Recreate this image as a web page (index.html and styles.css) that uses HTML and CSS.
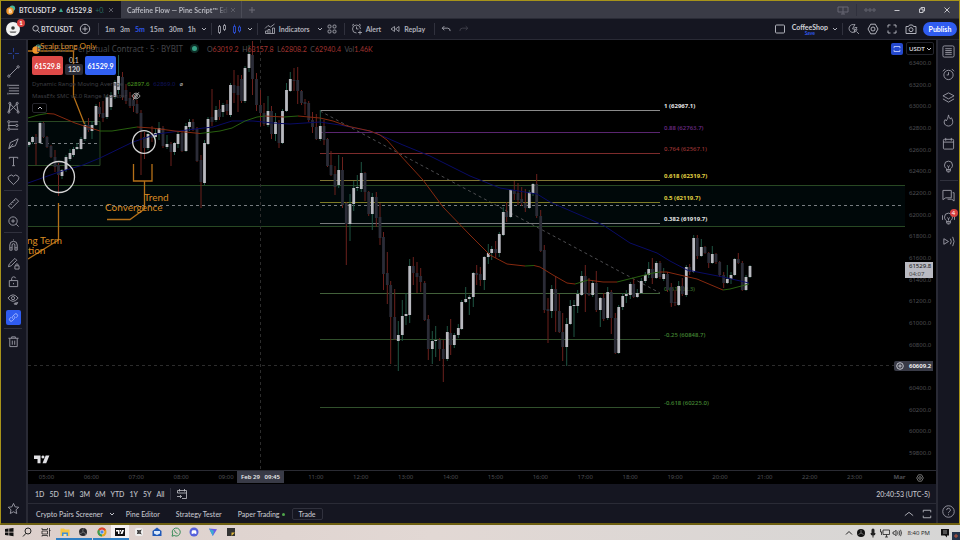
FILE: index.html
```
<!DOCTYPE html>
<html lang="en">
<head>
<meta charset="utf-8">
<title>BTCUSDT.P 61529.8</title>
<link rel="stylesheet" href="styles.css">
</head>
<body>
<svg class="defs" aria-hidden="true">
  <symbol id="chev" viewBox="0 0 8 8"><path d="M2 3l2 2 2-2"/></symbol>
  <symbol id="x" viewBox="0 0 8 8"><path d="M2 2l4 4M6 2l-4 4"/></symbol>
  <symbol id="plus" viewBox="0 0 8 8"><path d="M4 1v6M1 4h6"/></symbol>
  <symbol id="search" viewBox="0 0 12 12"><circle cx="5.500" cy="5.200" r="3.300"/><path d="M8 7.800l2.600 2.700"/></symbol>
  <symbol id="gear" viewBox="0 0 12 12"><path d="M3.700 1.200h4.600L11 6l-2.700 4.800H3.700L1 6z"/><circle cx="6" cy="6" r="2"/></symbol>
  <symbol id="corners" viewBox="0 0 12 12"><path d="M2 4.500V2h2.500M7.500 2H10v2.500M10 7.500V10H7.500M4.500 10H2V7.500"/></symbol>
  <symbol id="bulb" viewBox="0 0 14 14"><path d="M5 9.500C3.500 8.500 2.700 7.300 2.700 5.500a4.300 4.300 0 0 1 8.600 0c0 1.800-.8 3-2.300 4v2.500H5zM5 10.300h4M6 13h2M5.500 6l1.500 1.200L8.500 6M7 7.200v2"/></symbol>
  <symbol id="bars" viewBox="0 0 14 14"><path d="M2 2.500h11M2 5.500h11M2 8.500h11M2 11.500h11"/><path d="M1 1.500v2M1 10.500v2"/></symbol>
</svg>

<div class="window">
  <header class="tabs">
    <div class="tab tab-on">
      <svg class="coin" viewBox="0 0 10 10"><circle cx="6.300" cy="3.300" r="2.800" fill="#43b59d"/><circle cx="4" cy="6" r="3.700" fill="#f0952a"/><path d="M3.200 4.200h1.200a.8.8 0 0 1 0 1.700H3.200h1.500a.9.9 0 0 1 0 1.800H3.200z" stroke="#fff" fill="none" stroke-width=".7"/></svg>
      <b>BTCUSDT.P</b><i class="tri"></i><b>61529.8</b><span class="fade">+0.57</span>
      <svg class="i8 dim"><use href="#x"/></svg>
    </div>
    <div class="tab tab-off"><b class="fade2">Caffeine Flow — Pine Script™ Edi</b><svg class="i8 dim"><use href="#x"/></svg></div>
    <button class="newtab" aria-label="New tab"><svg class="i8"><use href="#plus"/></svg></button>
    <div class="winctl">
      <svg class="i12" viewBox="0 0 12 12"><path d="M1 3h10v5H1zM6 3v7M4 10h4"/></svg>
      <i class="vsep"></i>
      <svg class="i12" viewBox="0 0 12 12"><circle cx="2" cy="6" r="1.200"/><circle cx="6" cy="6" r="1.200"/><circle cx="10" cy="6" r="1.200"/></svg>
      <button aria-label="Minimize"><svg class="i8 lit" viewBox="0 0 8 8"><path d="M1.500 4.500h5"/></svg></button>
      <button aria-label="Restore"><svg class="i8 lit" viewBox="0 0 8 8"><path d="M1.500 3h3.500v3.500H1.500zM3 3V1.500h3.500V5H5"/></svg></button>
      <button aria-label="Close"><svg class="i8 lit" viewBox="0 0 8 8"><path d="M1.500 1.500l5 5M6.500 1.500l-5 5"/></svg></button>
    </div>
  </header>

  <nav class="top">
    <button class="avatar" aria-label="Account"><svg viewBox="0 0 14 14"><circle cx="7" cy="7" r="7" fill="#f2f2f2"/><circle cx="7" cy="6" r="1.800" fill="#333"/><path d="M3.500 9.500h7l-1 1.300h-5z" fill="#555"/></svg><span class="badge">1</span></button>
    <button class="sym"><svg class="i10"><use href="#search"/></svg>BTCUSDT.</button>
    <button class="cmp" aria-label="Compare"><svg class="i12" viewBox="0 0 12 12"><circle cx="6" cy="6" r="4.700"/><path d="M6 3.500v5M3.500 6h5"/></svg></button>
    <i class="vsep"></i>
    <div class="ivals"><button>1m</button><button>3m</button><button class="on">5m</button><button>15m</button><button>30m</button><button>1h</button></div>
    <button aria-label="More intervals"><svg class="i8"><use href="#chev"/></svg></button>
    <i class="vsep"></i>
    <button aria-label="Candles"><svg class="i12 thin" viewBox="0 0 12 12"><path d="M2.500 3.500h2v6h-2zM3.500 2v1.500M3.500 9.500V11M7.500 2.500h2v4h-2zM8.500 1v1.500M8.500 6.500V8"/></svg></button>
    <button class="on hollow" aria-label="Hollow candles"><svg class="i12 thin" viewBox="0 0 12 12"><path d="M2.500 3.500h2v6h-2zM3.500 1.500v2M3.500 9.500V11M7.500 4h2v4h-2zM8.500 2.500V4M8.500 8v1.500"/></svg></button>
    <button aria-label="More styles"><svg class="i8"><use href="#chev"/></svg></button>
    <i class="vsep"></i>
    <button class="txt"><svg class="i12 thin" viewBox="0 0 12 12"><path d="M1.500 10.500h9V5h-2v5.500M6 10.500V6.500H4v4M4 8H1.500v2.500M1 5.500l3-3 2.500 1.500L10.500 1"/></svg>Indicators</button>
    <button aria-label="Favorites"><svg class="i8"><use href="#chev"/></svg></button>
    <button class="tpl" aria-label="Templates"><svg class="i12 thin" viewBox="0 0 12 12"><rect x="2" y="2" width="3" height="3" rx="1"/><rect x="7" y="2" width="3" height="3" rx="1"/><rect x="2" y="7" width="3" height="3" rx="1"/><rect x="7" y="7" width="3" height="3" rx="1"/></svg></button>
    <i class="vsep"></i>
    <button class="txt"><svg class="i12 thin" viewBox="0 0 12 12"><path d="M9.500 6A4 4 0 1 0 5.500 10M5.500 3.500V6h2M1 2.500L3 1M10 2.500L8 1M9 7.500v4M7 9.500h4"/></svg>Alert</button>
    <button class="txt"><svg class="i12 thin" viewBox="0 0 12 12"><path d="M5.500 3.500L2 6l3.500 2.500zM10 3.500L6.500 6 10 8.500z"/></svg>Replay</button>
    <i class="vsep"></i>
    <button class="un" aria-label="Undo"><svg class="i10" viewBox="0 0 12 12"><path d="M4 2.500L1.500 5 4 7.500M1.500 5H8q3 0 3 3.500"/></svg></button>
    <button class="un off" aria-label="Redo"><svg class="i10" viewBox="0 0 12 12"><path d="M8 2.500L10.500 5 8 7.500M10.500 5H4Q1 5 1 8.500"/></svg></button>
    <div class="topright">
      <svg class="i12" viewBox="0 0 12 12"><rect x="1.500" y="2" width="9" height="8" rx="1"/></svg>
      <button class="layout">CoffeeShop<small>Save</small></button>
      <svg class="i8"><use href="#chev"/></svg>
      <i class="vsep"></i>
      <button aria-label="Quick search"><svg class="i12 thin" viewBox="0 0 12 12"><path d="M7 2a4 4 0 1 0 2 4M8.500 8.500l2.500 2.500M7 1L4.500 6H7l-1 3 3-4.500H6.500"/></svg></button>
      <button aria-label="Settings"><svg class="i12"><use href="#gear"/></svg></button>
      <button aria-label="Fullscreen"><svg class="i12"><use href="#corners"/></svg></button>
      <button aria-label="Snapshot"><svg class="i12" viewBox="0 0 12 12"><path d="M1 3.500h2.500l1-1.500h3l1 1.500H11v7H1z"/><circle cx="6" cy="6.700" r="2"/></svg></button>
      <button class="publish">Publish</button>
    </div>
  </nav>

  <main class="work">
    <aside class="tools">
      <button class="on" aria-label="Cross"><svg viewBox="0 0 14 14"><path d="M7 1v4.500M7 8.500V13M1 7h4.500M8.500 7H13"/></svg></button>
      <button aria-label="Trend line"><svg viewBox="0 0 14 14"><path d="M3 11l8-8"/><circle cx="2" cy="12" r="1.200"/><circle cx="12" cy="2" r="1.200"/></svg></button>
      <button aria-label="Fibonacci"><svg><use href="#bars"/></svg></button>
      <button aria-label="Pattern"><svg viewBox="0 0 14 14"><path d="M2 11.500L3.500 3 7 7l3.500-4L12 11.500M3.500 3L2 11.500 7 7l5 4.500"/><circle cx="3" cy="2.500" r="1.100"/><circle cx="11" cy="2.500" r="1.100"/><circle cx="2" cy="12" r="1.100"/><circle cx="12" cy="12" r="1.100"/></svg></button>
      <button aria-label="Forecast"><svg viewBox="0 0 14 14"><path d="M3.500 3H12M1 7h8M3.500 11H12M2 4.500v5"/><circle cx="2" cy="3" r="1.200"/><circle cx="2" cy="11" r="1.200"/><circle cx="10.500" cy="7" r="1.200"/></svg></button>
      <button aria-label="Brush"><svg viewBox="0 0 14 14"><path d="M2 12.500L3.500 6 12 2l-3 7.500-4 1zM2 12.500l4.500-5"/></svg></button>
      <button aria-label="Text"><svg viewBox="0 0 14 14"><path d="M2.500 4V2.500h9V4M7 2.500v9M5.500 11.500h3"/></svg></button>
      <button aria-label="Emoji"><svg viewBox="0 0 14 14"><path d="M7 12.500L2 7.500A3 3 0 0 1 7 3.500 3 3 0 0 1 12 7.500z"/></svg></button>
      <hr>
      <button aria-label="Measure"><svg viewBox="0 0 14 14"><path d="M1.500 9.500l8-8 3 3-8 8zM4 7.500l1 1M6 5.500l1 1M8 3.500l1 1"/></svg></button>
      <button aria-label="Zoom"><svg viewBox="0 0 14 14"><circle cx="6.500" cy="6.500" r="4.500"/><path d="M10 10l2.500 2.500M6.500 4.500v4M4.500 6.500h4"/></svg></button>
      <hr>
      <button aria-label="Magnet"><svg viewBox="0 0 14 14"><path d="M3 12V6.500a4 4 0 0 1 8 0V12H8.500V6.500a1.500 1.500 0 0 0-3 0V12zM3 9.500h2.500M8.500 9.500H11M7 .5v1"/></svg></button>
      <button aria-label="Keep drawing"><svg viewBox="0 0 14 14"><path d="M1.500 10.500l1-3 6-6 2 2-6 6zM8.500 9.500h4.500v3.500H8.500zM9.500 9.500V8.500a1.200 1.200 0 0 1 2.400 0v1"/></svg></button>
      <button aria-label="Lock"><svg viewBox="0 0 14 14"><path d="M2.500 6h9v6.500h-9zM5 6V4a2.200 2.200 0 0 1 4.300-.5M7 8.500v1.500"/></svg></button>
      <button aria-label="Hide"><svg viewBox="0 0 14 14"><path d="M1 5.500q5.500-7 11 0-5.500 7-11 0zM8 12l4-2"/><circle cx="6.500" cy="5.500" r="1.700"/><ellipse cx="9.500" cy="11.500" rx="1.700" ry=".8"/></svg></button>
      <button class="active" aria-label="Sync drawings"><svg viewBox="0 0 14 14"><path d="M6 8.500a2.300 2.300 0 0 1 0-3l2.500-2.700a2.200 2.200 0 0 1 3.200 3L10 7.500M8 5.500a2.300 2.300 0 0 1 0 3l-2.500 2.700a2.200 2.200 0 0 1-3.200-3L4 6.500"/></svg></button>
      <hr>
      <button aria-label="Delete"><svg viewBox="0 0 14 14"><path d="M1.500 3.500h11M3 3.500v9h8v-9M5 3.500V2h4v1.500M5.700 6v4.500M8.300 6v4.500"/></svg></button>
      <button class="last" aria-label="Favorite"><svg viewBox="0 0 14 14"><path d="M7 1.500l1.700 3.700 4 .5-3 2.700.8 4L7 10.500l-3.500 1.900.8-4-3-2.700 4-.5z"/></svg></button>
    </aside>

    <section class="center">
      <div class="chartrow">
        <div class="chart">
          <svg id="plot" class="plot" viewBox="28 40 877 430" preserveAspectRatio="xMinYMin slice" role="img" aria-label="Price chart">
            <g fill="#000809" stroke="#284823"><path d="M20 185.500h900v41H20z"/><path d="M20 121.500h80v44H20z"/></g>
            <g stroke="#777c80" stroke-dasharray="3 3"><path d="M28 205.500h876M28 143.500h72"/></g>
            <g stroke="#2c2c2c" stroke-dasharray="3 3"><path d="M260.500 40v430M28 365.500h876"/></g>
            <path d="M320 111L660 293" stroke="#4d4d50" stroke-dasharray="3 3"/>
            <g id="fib"></g>
            <g id="candles"></g>
            <g fill="none" stroke-width="1">
              <path stroke="#090b66" d="M28 183L59 172 83 165 100 158 133 142 157 134 187 130 213 127 232 121 253 121 273 123 290 124 320 122 340 125 370 131 387 138 403 145 430 156 470 176 500 188 537 194 550 202 580 215 603 225 630 243 657 253 670 261 687 270 723 277 749 283"/>
              <path stroke="#86290f" d="M47 113.500L54 114 75 123 100 131M137 127L152 128 175 131 200 133.500M265 116L284 117M298 116L320 118 333 121 347 126 370 131 380 135 387 140 400 155 423 180 443 207 470 235 490 255 507 264 525 266M534 265.500L540 267 553 275 567 283 575 284M588 280L603 282 617 282M660 272L667 272 697 279 723 290"/>
              <path stroke="#28600f" d="M28 118L38 115 47 113.500M100 131L112 131 137 127M200 133.500L220 131 232 128 245 121 257 117 265 116M284 117L298 116M525 266L534 265.500M575 284L588 280M617 282L637 277 653 273 660 272M723 290L730 289 749 284"/>
            </g>
            <g fill="none" stroke="#d5d5d5" stroke-width="1.300"><circle cx="59" cy="177" r="15.500"/><circle cx="144" cy="142" r="11.300"/></g>
            <g fill="none" stroke="#b57018" stroke-width="1.300"><path d="M28 51h45.500v45l11 28M133.500 164v17h18.500v-17M144.500 181v28L130 219.500h-23M58.500 203v37L28 259"/></g>
            <g class="notes"><text x="144" y="201">Trend</text><text x="105" y="211">Convergence</text><text x="27" y="244">ng Term</text><text x="28" y="254">tion</text></g>
            <path fill="#e0e0e4" d="M34 455.500h6.500v7.800h-3v-4.300H34zM43 455.500a1.500 1.500 0 1 1-.1 0zM45.700 455.500h3.700l-3.200 7.800h-3.700z"/>
          </svg>
          <div class="legend">
            <div class="title"><svg class="coin" viewBox="0 0 10 10"><circle cx="6.300" cy="3.300" r="2.800" fill="#43b59d"/><circle cx="4" cy="6" r="3.700" fill="#f0952a"/></svg><span class="name">BTCUSDT Perpetual Contract · 5 · BYBIT<span class="scalp">Scalp Long Only</span></span><i class="live"></i><span class="ohlc">O<em>63019.2</em> &nbsp;H<em>63157.8</em> &nbsp;L<em>62808.2</em> &nbsp;C<em>62940.4</em> &nbsp;Vol<em>1.46K</em></span></div>
            <div class="trade"><button class="sell">61529.8</button><div class="qty"><span>0.1</span><b>120</b></div><button class="buy">61529.9</button></div>
            <div class="ind">Dynamic Range Moving Average <span class="g">62897.6</span> <span class="b">62869.0</span> <span class="o">ø</span></div>
            <div class="ind">MassEfx SMC v2.0 Range Monster <svg class="i10" viewBox="0 0 12 12"><path d="M1 6q5-7 10 0-5 7-10 0zM2.500 10.500l7-9"/><circle cx="6" cy="6" r="1.700"/></svg></div>
            <button class="fold" aria-label="Collapse"><svg class="i8" viewBox="0 0 8 8"><path d="M2 5l2-2 2 2"/></svg></button>
          </div>
          <button class="sync" aria-label="Sync"><svg class="i10" viewBox="0 0 12 12"><path d="M2.500 5V3h7v2M9.500 7v2h-7V7"/></svg></button>
          <span class="pluscross"><svg class="i8" viewBox="0 0 8 8"><circle cx="4" cy="4" r="3.300"/><path d="M4 2.300v3.400M2.300 4h3.400"/></svg></span>
        </div>
        <div class="paxis">
          <label class="cur"><select aria-label="Currency"><option>USDT</option></select><svg class="i8"><use href="#chev"/></svg></label>
          <div class="plist"><span>63400.0</span><span>63200.0</span><span>63000.0</span><span>62800.0</span><span>62600.0</span><span>62400.0</span><span>62200.0</span><span>62000.0</span><span>61800.0</span><span>61600.0</span><span>61400.0</span><span>61200.0</span><span>61000.0</span><span>60800.0</span><span></span><span>60400.0</span><span>60200.0</span><span>60000.0</span><span>59800.0</span></div>
          <div class="last-price">61529.8<br><span>04:07</span></div>
          <div class="cross-price">60609.2</div>
        </div>
      </div>
      <div class="taxis">
        <div class="times"><span>05:00</span><span>06:00</span><span>07:00</span><span>08:00</span><span>09:00</span><span></span><span>11:00</span><span>12:00</span><span>13:00</span><span>14:00</span><span>15:00</span><span>16:00</span><span>17:00</span><span>18:00</span><span>19:00</span><span>20:00</span><span>21:00</span><span>22:00</span><span>23:00</span><b>Mar</b></div>
        <span class="cross-time">Feb 29 &nbsp; 09:45</span>
        <button class="axisgear" aria-label="Axis settings"><svg class="i8" viewBox="0 0 12 12"><use href="#gear"/></svg></button>
      </div>
      <div class="ranges"><button>1D</button><button>5D</button><button>1M</button><button>3M</button><button>6M</button><button>YTD</button><button>1Y</button><button>5Y</button><button>All</button><i class="vsep"></i><button aria-label="Go to date"><svg class="i12 thin" viewBox="0 0 12 12"><path d="M1.500 5V2.500h9v8H6M1.500 5h9M3.500 1v2.500M8.500 1v2.500M1 8.500h4.500M4 7l1.500 1.500L4 10"/></svg></button><span class="clock">20:40:53 (UTC-5)</span></div>
      <div class="panels"><button class="scr">Crypto Pairs Screener<svg class="i8"><use href="#chev"/></svg></button><button>Pine Editor</button><button>Strategy Tester</button><button>Paper Trading<i class="gdot"></i></button><button class="tradebtn">Trade</button><span class="pend"><svg class="i10" viewBox="0 0 12 12"><path d="M1 8l5-4 5 4"/></svg><svg class="i10" viewBox="0 0 12 12"><path d="M1.500 4V1.500h9V4M10.500 8v2.500h-9V8"/></svg></span></div>
    </section>

    <aside class="rail">
      <button aria-label="Watchlist"><svg viewBox="0 0 14 14"><rect x="1" y="1" width="12" height="12" rx="1.500"/><path d="M3.500 4h7M3.500 6h7M3.500 8h7M3.500 10h7"/></svg></button>
      <button aria-label="Alerts"><svg viewBox="0 0 14 14"><circle cx="7" cy="7.500" r="5"/><path d="M7 4.500v3H5M1 3.500L3.500 1M13 3.500L10.500 1"/></svg></button>
      <button aria-label="Object tree"><svg viewBox="0 0 14 14"><path d="M7 2l6 3.200-6 3.300-6-3.300zM1 8.500l6 3.500 6-3.500"/></svg></button>
      <button aria-label="Hotlists"><svg viewBox="0 0 14 14"><path d="M7 1c.5 3 1.500 3 2 4.500l1-1.500c2 2.500 3 8.500-3 9-6-.5-5-6-3.500-7L4.500 7.500C6 5.500 6.500 4 7 1z"/></svg></button>
      <button aria-label="Calendar"><svg viewBox="0 0 14 14"><rect x="1.500" y="2.500" width="11" height="10.500" rx="1"/><path d="M1.500 5.500h11M4 1v3M10 1v3"/></svg></button>
      <button aria-label="Ideas"><svg><use href="#bulb"/></svg></button>
      <hr>
      <button aria-label="Chats"><svg viewBox="0 0 14 14"><path d="M1 1.500h9v8H4L1 11.500zM11.500 4H13v9l-2.500-2H6"/></svg></button>
      <button class="ntf" aria-label="Streams"><svg viewBox="0 0 14 14"><use href="#bulb"/><path d="M.5 3.500v5M13.500 3.500v5"/></svg><span class="badge">4</span></button>
      <button aria-label="Broadcast"><svg viewBox="0 0 14 14"><path d="M2 4v6l5-3zM9 4q2 3 0 6M11.500 2q3 5 0 10"/></svg></button>
      <button class="last" aria-label="Help"><svg viewBox="0 0 14 14"><circle cx="7" cy="7" r="6.200"/><path d="M5 5.500a2 2 0 1 1 2.800 1.800Q7 7.800 7 8.800M7 10v1"/></svg></button>
    </aside>
  </main>
</div>

<footer class="taskbar">
  <div class="apps">
    <button aria-label="Start"><svg viewBox="0 0 10 10" fill="#111"><path d="M1 2l3.500-.5v3.200H1zM5.200 1.400L9.500 1v3.700H5.200zM1 5.400h3.500v3.200L1 8zM5.200 5.400h4.300V9.200l-4.300-.6z"/></svg></button>
    <button aria-label="Search"><svg viewBox="0 0 10 10" fill="none" stroke="#222"><circle cx="6" cy="4" r="3"/><path d="M4 6.300L1 9.500"/></svg></button>
    <button aria-label="Task view"><svg viewBox="0 0 10 10" fill="none" stroke="#222" stroke-width=".8"><path d="M1 1v1.500h5.500V1M1 4h5.500v3H1zM1 9.500V8.500h5.500v1M8.500 1v8.500M8 3.500h1.500"/></svg></button>
    <button class="run" aria-label="Files"><svg viewBox="0 0 10 10"><path d="M.5 1.500h3.500l1 1h4.500V9h-9z" fill="#f5c644"/><path d="M2 5.500h6V9H2z" fill="#3f8fd6"/><path d="M3.500 7h3v2h-3z" fill="#f5e3a0"/></svg></button>
    <button class="run" aria-label="OBS"><svg viewBox="0 0 10 10"><circle cx="5" cy="5" r="4" fill="#2a2a2d"/><path d="M5 5q-1-3 1-3.500M5 5q3 .5 2.500 3M5 5q-2 2.500-4 1" stroke="#888" fill="none" stroke-width=".7"/></svg></button>
    <button class="run" aria-label="Chrome"><svg viewBox="0 0 10 10"><circle cx="5" cy="5" r="4.500" fill="#e2a51f"/><path d="M5 5L1.100 2.700A4.500 4.500 0 0 1 8.900 2.700z" fill="#db4437"/><path d="M5 5L1.100 2.700A4.500 4.500 0 0 0 5 9.500z" fill="#3a9a52"/><circle cx="5" cy="5" r="2" fill="#4a87ee" stroke="#fff" stroke-width=".6"/></svg></button>
    <button class="run sel" aria-label="TradingView"><svg viewBox="0 0 10 10"><path fill="#111" d="M0 1h10v8H0z"/><path fill="#fff" d="M1 3h3.500v4H3V4.500H1zM5 3h1v1.500H5zM7 3h2L7.500 7h-2z"/></svg></button>
    <button aria-label="CapCut"><svg viewBox="0 0 10 10"><rect x="1" y="1" width="8" height="8" rx="2" fill="#eee"/><path d="M3 3.700h3L7.500 3M3 6.300h3l1.500.7M3 3.700l4 2.300M3 6.300L7 4" stroke="#222" fill="none" stroke-width=".9"/></svg></button>
    <button aria-label="Mail"><svg viewBox="0 0 10 10"><path d="M.5 4L5 .5 9.500 4v5h-9z" fill="#2059b8"/><path d="M2 4h6v2.500L5 8 2 6.500z" fill="#dceafa"/></svg></button>
    <button aria-label="WhatsApp"><svg viewBox="0 0 10 10" fill="none" stroke="#3b8c5a" stroke-width="1"><path d="M1 9.200l.7-2.300A4 4 0 1 1 3.200 8.500z"/><path d="M3.500 3.200q.2 2.800 3 3.300"/></svg></button>
    <button aria-label="Discord"><svg viewBox="0 0 10 10"><circle cx="5" cy="5" r="4.500" fill="#5661dc"/><path d="M2.500 6.500q0-3 1-3.200h3q1 .2 1 3.200l-1.200.5-.5-.6h-1.600l-.5.6z" fill="#fff"/></svg></button>
    <button aria-label="Proton"><svg viewBox="0 0 10 10"><path d="M1 1.500l8 .7L4.800 9z" fill="#6a5ae8"/><path d="M1 1.500l5 2.500-1.200 5z" fill="#3aaed0"/></svg></button>
    <button aria-label="Notes"><svg viewBox="0 0 10 10"><path d="M1 1h8v8H1z" fill="#333"/><path d="M5.500 9V5.500H9z" fill="#e2b93b"/></svg></button>
  </div>
  <div class="tray">
    <svg viewBox="0 0 10 10" fill="none" stroke="#222"><path d="M2 6.500l3-3 3 3"/></svg>
    <svg viewBox="0 0 10 10"><circle cx="5" cy="5" r="4" fill="#111"/><path d="M5 5V2M5 5l2.500 1.500M5 5L2.500 6.500" stroke="#aaa" stroke-width=".6"/></svg>
    <svg viewBox="0 0 10 10" fill="#222"><rect x="3.500" y=".5" width="3" height="5.500" rx="1.500"/><path d="M2.500 5h5q0 2.500-2 2.500V9.500h-1V7.500q-2 0-2-2.500z"/></svg>
    <svg viewBox="0 0 10 10" fill="none" stroke="#222" stroke-width=".8"><path d="M3 2h6.500v4.500H3zM5 9h3M6.500 6.500V9M.5 1v3h2M1.500 4v3"/></svg>
    <svg viewBox="0 0 10 10" fill="none" stroke="#222" stroke-width=".8"><path d="M1 4v2h1.300L4 7.800V2.200L2.300 4zM5.500 3.500q1 1.500 0 3M7 2.500q1.800 2.500 0 5M8.500 1.800q2 3.200 0 6.400"/></svg>
    <time>8:40 PM</time>
    <svg class="note" viewBox="0 0 10 10" fill="#111"><path d="M1 1h8v6.500H7V9.500L5 7.500H1z"/><path d="M3 3h4M3 5h4" stroke="#ccc" stroke-width=".7"/></svg>
    <svg class="pin" viewBox="0 0 8 8"><path fill="#243349" d="M0 0h8v8H0z"/><path d="M4 2v4M2 4h4" stroke="#c0583c"/></svg>
  </div>
</footer>
<script src="chart.js"></script>
</body>
</html>
```
FILE: styles.css
```
* { box-sizing: border-box; }
html, body { height: 100%; margin: 0; }
body {
  display: flex; flex-direction: column; overflow: hidden;
  background: #000; color: #c4c5cc;
  font: 7px/10px Lato, "Open Sans", sans-serif;
}
button { all: unset; box-sizing: border-box; display: flex; align-items: center; justify-content: center; flex: none; cursor: pointer; }
svg { display: block; flex: none; }
.defs { position: absolute; width: 0; height: 0; }
.window svg { fill: none; stroke: currentColor; stroke-width: 1; }
.window .thin { stroke-width: .8; }
.window .coin { width: 10px; height: 10px; stroke: none; }
.i8 { width: 8px; height: 8px; }
.i10 { width: 10px; height: 10px; }
.i12 { width: 12px; height: 12px; }
.vsep { width: 1px; height: 12px; background: #30313d; flex: none; }
.window {
  flex: 1; min-height: 0; display: flex; flex-direction: column;
  border: 1px solid #a8941a; border-bottom: 2px solid #6d5f10; background: #292a35;
}
.badge { position: absolute; background: #d8403f; color: #fff; border-radius: 50%; width: 8px; height: 8px; font-size: 6px; line-height: 8px; text-align: center; }

.tabs { display: flex; height: 17px; background: #3a3b46; flex: none; }
.tab { display: flex; align-items: center; font-size: 7px; color: #d8d8dc; }
.tab-on { width: 120px; background: #15151f; padding: 0 6px 0 5px; gap: 3px; }
.tab-on b { font-weight: 700; }
.tab-on .i8 { margin-left: auto; }
.tri { border: 2px solid transparent; border-bottom: 4px solid #3aa98c; border-top: 0; }
.fade { color: #2b6f62; width: 16px; overflow: hidden; }
.tab-off { width: 121px; padding: 0 4px 0 6px; border-right: 1px solid #4b4c57; color: #b5b6be; justify-content: space-between; }
.fade2 { flex: 1; min-width: 0; overflow: hidden; white-space: nowrap; font-weight: 700; -webkit-mask-image: linear-gradient(90deg, #000 85%, transparent); mask-image: linear-gradient(90deg, #000 85%, transparent); }
.dim { color: #5b5c66; }
.newtab { width: 20px; color: #6c6d77; }
.winctl { margin-left: auto; display: flex; align-items: center; gap: 7px; color: #666772; padding-right: 8px; }
.winctl button { margin-left: 10px; }
.winctl .lit { color: #c6c6cc; }

.top { display: flex; align-items: center; height: 21px; flex: none; background: #151621; border-top: 1px solid #2a2b36; padding: 0 2px 0 5px; color: #b0b1ba; font-weight: 700; }
.top button { white-space: nowrap; }
.avatar { position: relative; width: 14px; height: 14px; }
.avatar svg { width: 14px; height: 14px; stroke: none; }
.avatar .badge { left: 11px; top: -3px; }
.sym { margin-left: 11px; width: 42px; justify-content: flex-start; color: #d2d3d8; }
.cmp { margin: 0 4px 0 6px; }
.ivals { display: flex; margin: 0 4px 0 2px; gap: 5px; }
.on { color: #2f56e8; }
.top > .vsep { margin: 0 4px 0 3px; }
.hollow { margin: 0 3px; }
.txt { gap: 3px; margin-right: 6px; }
.vsep + .txt, .txt + .txt { margin-left: 2px; }
.tpl { margin: 0 3px 0 2px; }
.un { margin-left: 2px; margin-right: 6px; }
.off { color: #44454f; }
.topright { margin-left: auto; display: flex; align-items: center; gap: 7px; }
.topright .layout { flex-direction: column; color: #d0d1d6; line-height: 8px; margin: 0 -4px 0 -1px; }
.layout small { font-size: 5px; line-height: 5px; color: #2f56e8; }
.topright .vsep { margin: 0 -2px 0 -4px; }
.topright .publish { background: #2f5cf0; color: #fff; height: 14px; width: 34px; border-radius: 7px; margin-left: -1px; }

.work { flex: 1; min-height: 0; display: flex; gap: 2px; padding-top: 1px; }
.tools, .rail { display: flex; flex-direction: column; align-items: center; background: #151621; flex: none; color: #9a9ba5; }
.tools { width: 25px; padding: 4px 1px 6px 0; }
.tools button { width: 18px; height: 18px; }
.tools svg { width: 13px; height: 13px; }
.tools .on { color: #27419a; }
.tools .active { width: 15px; height: 15px; background: #2f5cf0; border-radius: 2px; margin: 2px 0 1px; color: #b9c7ff; }
.tools .active svg { width: 11px; height: 11px; }
.tools hr, .rail hr { width: 18px; height: 1px; border: 0; background: #30313d; margin: 2px 0 3px; flex: none; }
.last { margin-top: auto; }
.rail { width: 21px; padding: 0; }
.rail button { width: 20px; height: 23px; position: relative; }
.rail svg { width: 13px; height: 13px; }
.rail .badge { left: 11px; top: 2px; }

.center { flex: 1; min-width: 0; display: flex; flex-direction: column; background: #000; }
.chartrow { flex: 1; min-height: 0; display: flex; }
.chart { position: relative; flex: 1; min-width: 0; overflow: hidden; }
.chart .plot { width: 100%; height: 100%; stroke: none; }
.plot text { stroke: none; font: 6px "Noto Sans", sans-serif; }
.plot .notes text { font: 10px Lato, sans-serif; fill: #d98a22; }
.legend { position: absolute; left: 4px; top: 3px; display: flex; flex-direction: column; align-items: flex-start; }
.title { display: flex; align-items: center; height: 11px; color: #44454a; white-space: nowrap; }
.name { position: relative; width: 141px; display: flex; justify-content: flex-end; font: 8px/10px "Noto Sans", sans-serif; }
.scalp { position: absolute; left: -2px; top: -3px; font: 8px/10px Lato, sans-serif; color: #d98a22; }
.live { width: 5px; height: 5px; border-radius: 50%; background: #36a184; box-shadow: 0 0 0 2px #0d2c25; margin: 0 10px 0 9px; }
.ohlc { font-size: 7px; color: #4d4e54; }
.ohlc em { font-style: normal; color: #a33431; }
.trade { display: flex; align-items: flex-end; gap: 2px; margin-top: 2px; height: 19px; font-weight: 700; }
.sell, .buy { width: 31px; height: 19px; border-radius: 2px; color: #fff; background: #de4a48; }
.buy { background: #3160f2; }
.qty { width: 18px; text-align: center; color: #c8c8cc; line-height: 8px; }
.qty span { display: block; font-weight: 400; }
.qty b { display: block; background: #2b2c36; border-radius: 2px; line-height: 11px; }
.ind { display: flex; gap: 4px; align-items: center; height: 12px; color: #3d3e42; font: 6px/10px "Noto Sans", sans-serif; }
.trade + .ind { margin-top: 3px; }
.ind .g { color: #4c9c22; }
.ind .b { color: #11145c; }
.ind .o, .ind svg { color: #bbb; }
.fold { width: 15px; height: 10px; border: 1px solid #26262c; border-radius: 2px; margin-top: 1px; }
.sync { position: absolute; right: 2px; top: 3px; width: 12px; height: 12px; background: #2448cc; color: #c8d4ff; border-radius: 2px; }
.pluscross { position: absolute; right: 0; top: 321px; width: 11px; height: 10px; background: #393b47; display: flex; align-items: center; justify-content: center; border-radius: 2px 0 0 2px; }
.paxis { position: relative; width: 31px; flex: none; font-family: "Noto Sans", sans-serif; font-size: 6px; color: #4e4f54; }
.cur { display: flex; align-items: center; width: 28px; height: 13px; margin: 2px 0 0 1px; border: 1px solid #23242c; border-radius: 2px; padding-left: 2px; color: #c4c5cc; }
.cur select { appearance: none; border: 0; background: none; color: inherit; font: 700 6px/10px Lato, sans-serif; padding: 0; width: 17px; }
.plist { position: absolute; top: 18px; bottom: 12px; left: 4px; display: flex; flex-direction: column; justify-content: space-between; }
.plist span { height: 10px; }
.last-price, .cross-price { position: absolute; left: 0; width: 28px; padding-left: 4px; }
.last-price { top: 222px; height: 16px; line-height: 8px; background: #b9bac2; color: #111; }
.last-price span { color: #444; }
.cross-price { top: 321px; height: 10px; background: #393b47; color: #fff; font-weight: 600; }
.taxis { position: relative; height: 14px; flex: none; border-top: 1px solid #2a2b33; overflow: hidden; color: #4e4f54; font-family: "Noto Sans", sans-serif; font-size: 6px; }
.times { display: grid; grid-template-columns: repeat(20, 1fr); margin: 0 14px 0 -4px; text-align: center; line-height: 13px; }
.cross-time { position: absolute; left: 209px; top: 0; width: 47px; height: 12px; line-height: 12px; text-align: center; background: #393b47; color: #e8e8ea; font-weight: 600; }
.axisgear { position: absolute; right: 12px; top: 3px; color: #aaa; }
.ranges { display: flex; align-items: center; height: 19px; flex: none; background: #151621; padding: 0 6px 0 7px; gap: 5px; font-weight: 500; }
.clock { margin-left: auto; }
.panels { display: flex; align-items: center; height: 20px; flex: none; background: #151621; border-top: 1px solid #2a2b36; padding: 1px 4px 0 8px; gap: 16px; font-weight: 500; }
.panels .scr { gap: 5px; margin-right: -6px; }
.gdot { width: 3px; height: 3px; border-radius: 50%; background: #4fa54a; margin-left: 2px; }
.tradebtn { border: 1px solid #30313d; border-radius: 2px; height: 12px; padding: 0 6px; margin-left: -9px; }
.pend { margin-left: auto; display: flex; gap: 8px; }

.taskbar { height: 15px; flex: none; display: flex; justify-content: space-between; background: linear-gradient(90deg, #dccfcb, #e2d8d4 45%, #d6d6d5); color: #222; }
.apps { display: flex; }
.apps button { width: 18px; border-bottom: 1px solid transparent; }
.apps button:nth-child(n+3) { margin-left: 1px; }
.apps button:nth-child(2n+5) { margin-left: 0; }
.apps svg { width: 10px; height: 10px; }
.apps .run { border-bottom: 2px solid #2f7fc4; }
.apps .sel { background: #f6f2f1; }
.tray { display: flex; align-items: center; gap: 2px; }
.tray svg { width: 10px; height: 10px; }
.tray time { margin: 0 8px 0 4px; font: 6px/10px "Open Sans", sans-serif; }
.tray .pin { width: 8px; height: 8px; align-self: flex-end; }
```
FILE: chart.js
```
const NS = 'http://www.w3.org/2000/svg';
const add = (parent, tag, attrs, text) => {
  const el = document.createElementNS(NS, tag);
  for (const k in attrs) el.setAttribute(k, attrs[k]);
  if (text) el.textContent = text;
  parent.appendChild(el);
};

// Fibonacci levels: y, line colour, label colour, label, weight
[
  [110.5, '#8b8b8b', '#e4e4e4', '1 (62967.1)', 700],
  [132.5, '#5a2570', '#702c8c', '0.88 (62763.7)', 500],
  [153.5, '#7c2b2b', '#9c3434', '0.764 (62567.1)', 500],
  [180.5, '#7e7434', '#e0d040', '0.618 (62319.7)', 700],
  [202.5, '#7d7a25', '#e0d040', '0.5 (62119.7)', 700],
  [223.5, '#77797b', '#e4e4e4', '0.382 (61919.7)', 700],
  [293.5, '#42613a', '#3a702c', '0 (61302.3)', 500],
  [339.5, '#31502c', '#448834', '-0.25 (60848.7)', 500],
  [407.5, '#31502c', '#448834', '-0.618 (60225.0)', 500]
].forEach(([y, line, color, label, weight]) => {
  add(fib, 'path', { d: `M320 ${y}H660`, stroke: line });
  add(fib, 'text', { x: 664, y: y - 3, fill: color, style: `font-weight:${weight}` }, label);
});

// Candles: x, high, body top, body bottom, low, 1 when the close is above the open
const data = [
[29,141,142,145,147,1],[32.5,136,137,142,144,1],[36,134,137,143,165,0],[40,121,123,143,144,1],[43.5,122,123,137,138,0],[47,136,137,147,148,0],[51,145,146,157,158,0],[55,150,157,167,172,0],[58.5,163,165,175,196,0],[62,169,170,176,179,1],[66,155,157,170,172,1],[70,149,153,159,161,1],[73.5,147,149,155,157,1],[77,143,147,149,150,1],[81,137,139,149,150,1],[85,121,125,139,141,1],[88.500,118,125,130,132,0],[92,121,125,131,139,1],[96,104,106,125,126,1],[99.500,102,107,114,117,0],[103,101,113,118,122,0],[107,95,97,117,119,1],[111,92,95,107,110,1],[115,80,82,97,99,1],[118.500,55,76,90,94,1],[122.500,72,77,97,100,0],[126,84,90,101,104,0],[130,92,98,106,108,0],[133.500,95,100,106,112,0],[137,100,104,113,114,0],[141,110,113,132,175,0],[144.500,132,137,148,159,0],[148,131,134,148,150,1],[152,126,133,138,142,0],[155.500,129,133,137,140,1],[159,122,128,133,140,1],[163,126,128,146,148,0],[167,135,144,147,149,1],[171,142,144,152,166,0],[174.500,142,143,152,155,1],[178,131,134,144,148,1],[182,132,133,151,152,0],[186,123,126,151,152,1],[189.500,119,122,127,131,1],[193,119,122,129,131,0],[197,127,129,161,162,0],[201,155,160,182,208,0],[204.500,140,143,183,185,1],[208,117,119,144,145,1],[212,89,117,122,126,0],[216,106,110,120,122,1],[219.500,100,109,117,120,0],[223,103,105,112,117,1],[227,100,104,111,115,0],[230.500,83,85,115,117,1],[234,70,85,93,103,0],[238,75,86,95,112,0],[241.500,75,79,101,103,0],[245,66,68,101,103,1],[249,45,54,68,72,1],[252.500,41,55,79,95,0],[256.500,73,79,105,111,0],[260.500,90,105,113,126,0],[264,103,113,124,126,0],[268,96,111,125,127,1],[271.500,106,111,134,139,0],[275.500,113,122,134,141,1],[279,120,123,143,148,0],[282.500,109,111,143,144,1],[286.500,83,90,111,112,1],[290.300,72,79,91,92,1],[294,68,80,81,91,0],[297.700,67,80,91,104,0],[301.500,90,91,103,105,0],[305,99,102,104,115,0],[308.700,101,103,120,122,0],[312.500,112,120,127,133,0],[316.300,114,127,139,140,0],[320.300,110,126,139,141,1],[324,120,126,140,145,0],[327.500,138,139,166,167,0],[331,151,165,175,176,0],[335,166,174,187,195,0],[338.700,155,170,185,188,1],[342.500,157,170,205,208,0],[346.300,202,203,224,265,0],[350,194,204,224,241,1],[353.700,181,188,204,211,1],[357.300,175,187,188,191,1],[361.300,162,173,189,192,1],[365,172,173,192,201,0],[368.700,191,192,214,216,0],[372.300,193,197,214,230,1],[376.300,192,197,218,227,0],[380,203,217,238,245,0],[383.500,232,237,274,290,0],[387.300,252,273,285,304,0],[390.700,281,285,317,364,0],[394.700,289,317,339,340,0],[398.300,321,335,341,371,1],[402.300,300,316,335,341,1],[406,293,314,316,325,1],[409.700,259,266,315,323,1],[413.300,257,266,273,285,0],[417,262,273,277,293,0],[420.700,268,276,282,292,0],[424.700,281,283,320,321,0],[428.300,315,319,349,360,0],[432.300,331,341,349,364,1],[435.700,326,340,341,357,1],[439.700,338,340,349,361,0],[443.300,340,349,359,382,0],[447.300,326,332,359,361,1],[450.700,319,333,345,355,0],[454.300,333,335,345,348,1],[458.300,324,328,335,338,1],[461.700,300,302,329,330,1],[465.700,287,299,302,303,1],[469.300,295,297,299,315,1],[473.300,272,273,297,307,1],[476.700,265,273,275,285,0],[480.300,267,274,280,286,0],[484.300,256,257,280,290,1],[488.300,244,253,257,264,1],[491.700,246,249,253,260,1],[495.700,241,249,253,258,0],[499.300,232,234,253,257,1],[503.300,207,212,235,236,1],[506.700,202,212,217,222,0],[510.700,189,190,217,218,1],[514.300,181,190,194,200,0],[518,183,193,200,205,0],[521.700,187,199,203,206,0],[525.300,189,203,208,212,0],[529.300,190,192,208,209,1],[533,183,184,193,196,1],[536.700,174,184,216,218,0],[540.700,210,216,251,252,0],[544.300,245,250,310,313,0],[548,298,309,311,343,0],[551.700,285,289,311,318,1],[555.700,276,289,311,332,0],[559.300,294,311,332,333,0],[562.700,313,332,347,361,0],[566.700,318,324,347,366,1],[570.300,300,306,324,325,1],[574,300,305,306,337,1],[577.700,290,294,306,313,1],[581.700,271,276,295,296,1],[585.300,265,276,294,312,0],[589,278,293,295,296,0],[592.700,280,283,295,297,1],[596.300,271,283,310,312,0],[600.300,297,298,310,327,1],[603.700,293,298,319,321,0],[607.700,287,292,318,320,1],[611.300,290,292,318,334,0],[615.300,313,318,353,354,0],[618.700,305,307,353,354,1],[622.700,293,296,307,310,1],[626.300,290,294,296,303,1],[630.300,282,284,295,299,1],[633.700,279,284,297,298,0],[637.300,289,293,297,298,1],[641.300,278,281,293,294,1],[645.300,272,275,281,283,1],[648.700,262,269,275,278,1],[652.300,258,269,278,284,0],[656.300,261,263,278,279,1],[660,261,263,277,279,0],[663.700,268,274,279,281,1],[667.500,272,274,290,292,0],[671.300,283,287,303,307,0],[675,290,302,303,306,0],[678.700,281,286,305,306,1],[682.300,278,286,294,296,0],[686.300,265,267,295,297,1],[689.700,264,267,272,275,0],[693.700,235,238,272,273,1],[697.300,235,238,256,259,0],[701.300,239,247,256,257,1],[705,246,247,253,254,0],[708.700,252,253,263,268,0],[712.300,246,254,263,264,1],[716,253,254,262,264,0],[719.700,261,262,275,277,0],[723.700,272,275,283,288,0],[727.300,265,279,283,284,1],[731,272,275,279,284,1],[734.700,258,259,275,276,1],[738.300,253,259,263,264,0],[742.300,261,263,290,291,0],[746,275,277,290,291,1],[750,265,266,277,278,1]
];
data.forEach(([x, h, t, b, l, up]) => {
  add(candles, 'path', { d: `M${x} ${h}V${l}`, stroke: up ? '#1f5443' : '#6c211d' });
  add(candles, 'rect', { x: x - 1.4, y: t, width: 2.8, height: b - t, fill: up ? '#b9bac0' : '#2b2c37' });
});
```
